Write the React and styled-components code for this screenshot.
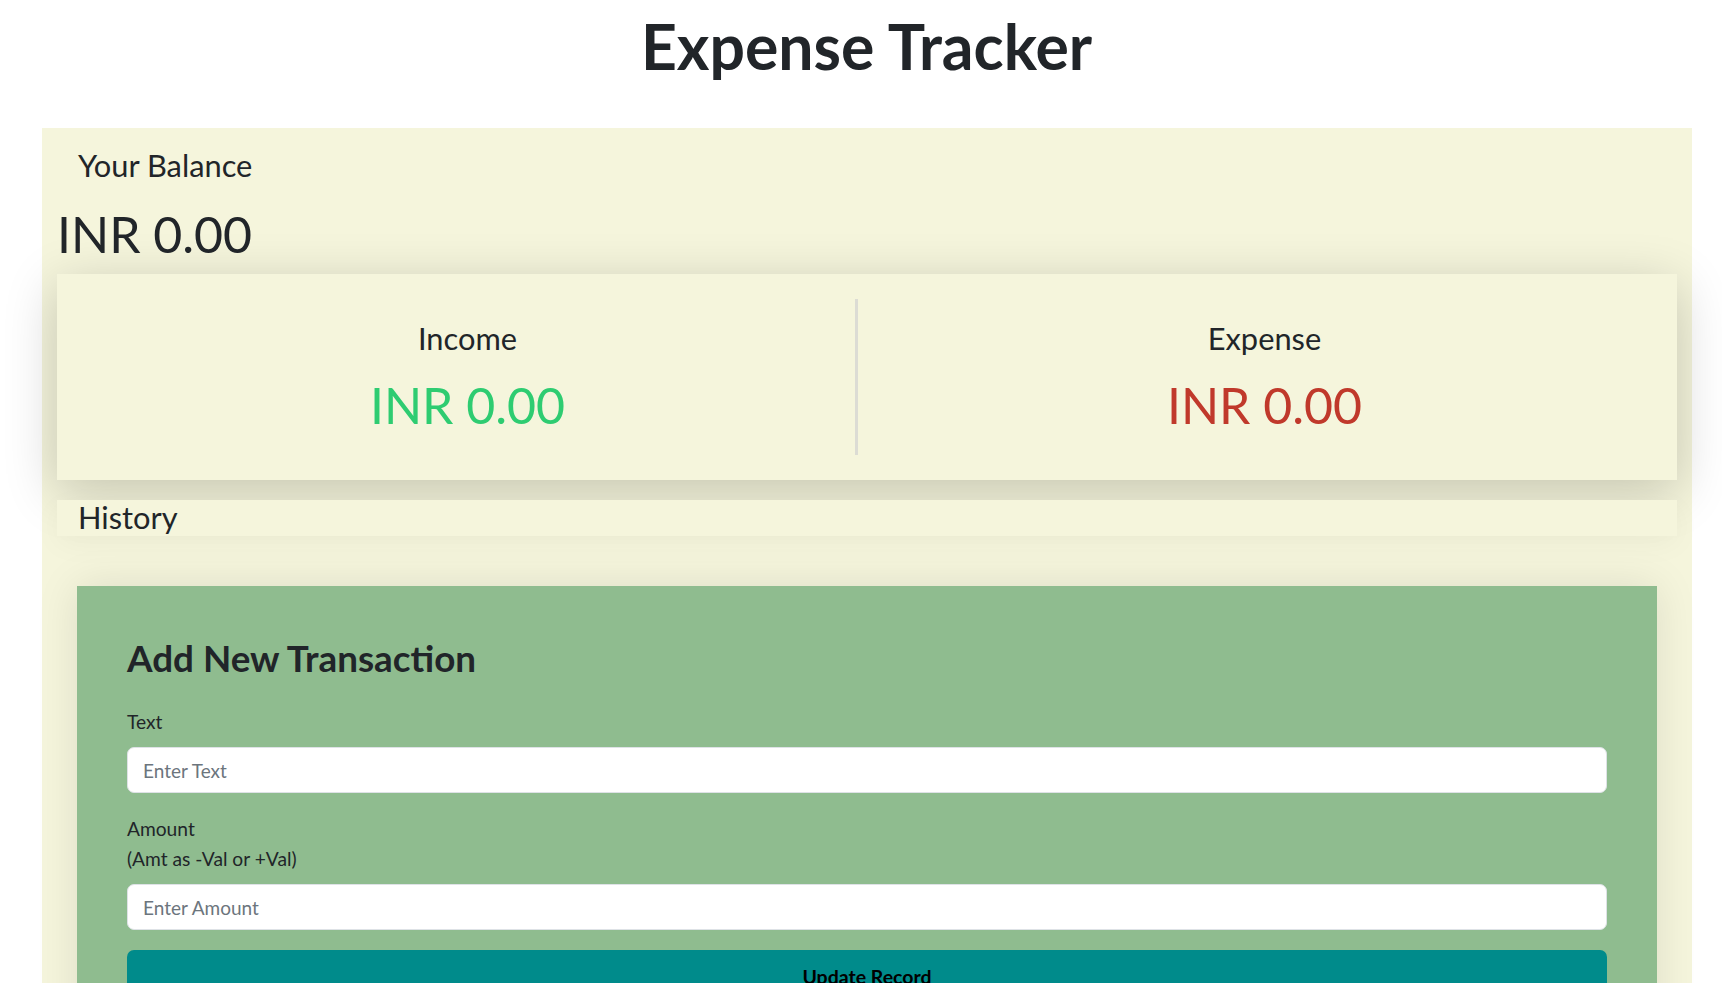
import styled, { createGlobalStyle } from "styled-components";

const GlobalStyle = createGlobalStyle`
  body {
    margin: 0;
    background: #ffffff;
    color: #212529;
    font-family: Lato, "Liberation Sans", sans-serif;
  }
  * {
    box-sizing: border-box;
  }
`;

export default function App() {
  return (
    <>
      <GlobalStyle />
      <Title>Expense Tracker</Title>
      <Wrapper>
        <Heading3 $indent>Your Balance</Heading3>
        <Amount>INR 0.00</Amount>

        <SummaryCard>
          <Column>
            <Heading3>Income</Heading3>
            <Amount $tone="#2ecc71">INR 0.00</Amount>
          </Column>
          <Divider />
          <Column>
            <Heading3>Expense</Heading3>
            <Amount $tone="#c0392b">INR 0.00</Amount>
          </Column>
        </SummaryCard>

        <HistoryBar>
          <Heading3 $tight>History</Heading3>
        </HistoryBar>

        <FormPanel>
          <FormTitle>Add New Transaction</FormTitle>
          <Field>
            <Label htmlFor="text">Text</Label>
            <Input id="text" type="text" placeholder="Enter Text" />
          </Field>
          <Field>
            <Label htmlFor="amount">
              Amount
              <br />
              (Amt as -Val or +Val)
            </Label>
            <Input id="amount" type="number" placeholder="Enter Amount" />
          </Field>
          <SubmitButton type="button">Update Record</SubmitButton>
        </FormPanel>
      </Wrapper>
    </>
  );
}

const Title = styled.h1`
  margin: 8px 0 0;
  padding-left: 11px;
  text-align: center;
  font-size: 62.5px;
  font-weight: 700;
  line-height: 1.2;
`;

const Wrapper = styled.div`
  margin: 45px 30px 0 42px;
  padding: 20px 15px 0;
  background: #f5f5dc;
`;

const Heading3 = styled.h3`
  margin: 0;
  padding-left: ${(p) => (p.$indent ? "21px" : "0")};
  font-size: 30.8px;
  font-weight: 400;
  line-height: ${(p) => (p.$tight ? "36px" : "1.2")};
`;

const Amount = styled.h1`
  margin: ${(p) => (p.$tone ? "17px 0 0" : "19px 0 10px")};
  font-size: 50px;
  font-weight: 400;
  line-height: 1.2;
  color: ${(p) => p.$tone || "#212529"};
`;

const SummaryCard = styled.div`
  display: grid;
  grid-template-columns: 48.8fr 3px 51.2fr;
  padding: 25px 6px 25px 23px;
  background: #f5f5dc;
  box-shadow: 0 12px 50px rgba(0, 0, 0, 0.2);
`;

const Column = styled.div`
  padding: 22px 0 20px;
  text-align: center;
`;

const Divider = styled.div`
  background: #dcdcd4;
`;

const HistoryBar = styled.div`
  margin-top: 20px;
  height: 36px;
  padding-left: 21px;
  background: #f5f5dc;
  box-shadow: 0 8px 30px rgba(0, 0, 0, 0.04);
`;

const FormPanel = styled.div`
  margin: 50px 20px 0;
  padding: 50px 50px 40px;
  background: #8fbc8f;
  box-shadow: 0 0 40px rgba(0, 0, 0, 0.1);
`;

const FormTitle = styled.h2`
  margin: 0 0 27px;
  font-size: 36.8px;
  font-weight: 700;
  line-height: 1.2;
`;

const Field = styled.div`
  margin-bottom: 21px;
`;

const Label = styled.label`
  display: block;
  margin-bottom: 10px;
  font-size: 19.2px;
  line-height: 30px;
`;

const Input = styled.input`
  display: block;
  width: 100%;
  height: 46px;
  padding: 0 15px;
  border: 1px solid #dee2e6;
  border-radius: 7px;
  background: #ffffff;
  font-family: inherit;
  font-size: 19px;
  color: #212529;
  outline: none;

  &::placeholder {
    color: #6c757d;
  }

  &::-webkit-outer-spin-button,
  &::-webkit-inner-spin-button {
    -webkit-appearance: none;
    margin: 0;
  }
`;

const SubmitButton = styled.button`
  display: block;
  width: 100%;
  margin-top: -1px;
  padding: 14px 0;
  border: none;
  border-radius: 7px;
  background: #008b8b;
  color: #000000;
  font-family: inherit;
  font-size: 19.5px;
  font-weight: 700;
  line-height: 26.4px;
  cursor: pointer;
`;
